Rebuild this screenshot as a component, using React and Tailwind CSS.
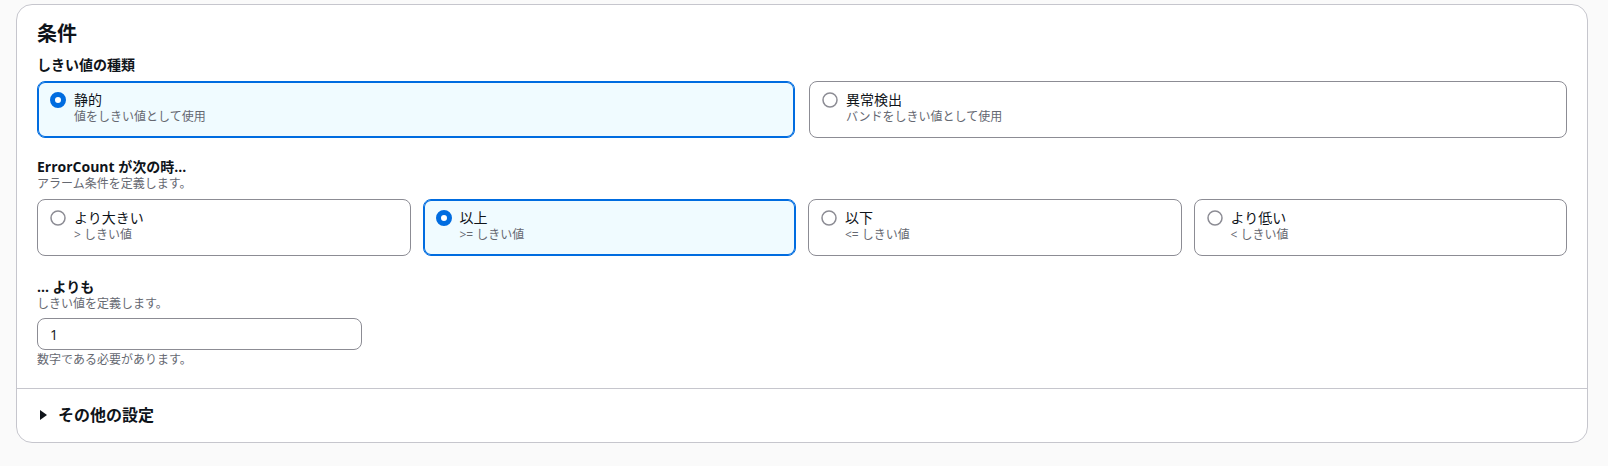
import React from "react";

function Radio({ checked }) {
  return checked ? (
    <svg width="16" height="16" viewBox="0 0 16 16" className="shrink-0 mt-[1px]">
      <circle cx="8" cy="8" r="5.5" fill="#ffffff" stroke="#006ce0" strokeWidth="5" />
    </svg>
  ) : (
    <svg width="16" height="16" viewBox="0 0 16 16" className="shrink-0 mt-[1px]">
      <circle cx="8" cy="8" r="7" fill="#ffffff" stroke="#8c8c94" strokeWidth="1.5" />
    </svg>
  );
}

function Tile({ title, desc, checked }) {
  return (
    <div
      className={
        checked
          ? "flex items-start rounded-lg border border-[#006ce0] shadow-[inset_0_0_0_1px_#006ce0] bg-[#f0fbff] pl-3 pr-3 pt-[9px] pb-[12px]"
          : "flex items-start rounded-lg border border-[#8c8c94] bg-white pl-3 pr-3 pt-[9px] pb-[12px]"
      }
    >
      <Radio checked={checked} />
      <div className="ml-[8px] flex flex-col">
        <span className="text-[14px] leading-[18px] text-[#0f141a]">{title}</span>
        <span className="text-[12px] leading-[16px] text-[#656871]">{desc}</span>
      </div>
    </div>
  );
}

export default function App() {
  return (
    <div
      className="min-h-[466px] bg-[#fafafa] pt-[4px] pl-4 pr-5"
      style={{ fontFamily: '"Open Sans", "Noto Sans CJK JP", sans-serif' }}
    >
      <div className="rounded-2xl border border-[#c6c6cd] bg-white">
        <div className="px-5 pt-[17px] pb-[20px]">
          <h2 className="text-[20px] leading-[24px] font-bold text-[#0f141a]">条件</h2>

          <div className="mt-[10px] text-[14px] leading-[18px] font-bold text-[#0f141a]">しきい値の種類</div>
          <div className="mt-[7px] grid grid-cols-2 gap-[14px]">
            <Tile title="静的" desc="値をしきい値として使用" checked />
            <Tile title="異常検出" desc="バンドをしきい値として使用" />
          </div>

          <div className="mt-[20px] text-[14px] leading-[18px] font-bold text-[#0f141a]">ErrorCount が次の時...</div>
          <div className="text-[12px] leading-[16px] text-[#656871]">アラーム条件を定義します。</div>
          <div className="mt-[7px] grid grid-cols-4 gap-3">
            <Tile title="より大きい" desc="> しきい値" />
            <Tile title="以上" desc=">= しきい値" checked />
            <Tile title="以下" desc="<= しきい値" />
            <Tile title="より低い" desc="< しきい値" />
          </div>

          <div className="mt-[22px] text-[14px] leading-[18px] font-bold text-[#0f141a]">... よりも</div>
          <div className="text-[12px] leading-[16px] text-[#656871]">しきい値を定義します。</div>
          <div className="mt-[6px] flex h-[32px] w-[325px] items-center rounded-lg border border-[#8c8c94] bg-white px-3 text-[14px] text-[#0f141a]">
            1
          </div>
          <div className="mt-[2px] text-[12px] leading-[16px] text-[#656871]">数字である必要があります。</div>
        </div>

        <div className="border-t border-[#c6c6cd] px-5 pt-[14px] pb-[15px]">
          <div className="flex items-center">
            <svg width="16" height="16" viewBox="0 0 16 16" className="shrink-0">
              <polygon points="3,3 10,8 3,13" fill="#0f141a" />
            </svg>
            <span className="ml-[5px] text-[16px] leading-[24px] font-bold text-[#0f141a]">その他の設定</span>
          </div>
        </div>
      </div>
    </div>
  );
}
